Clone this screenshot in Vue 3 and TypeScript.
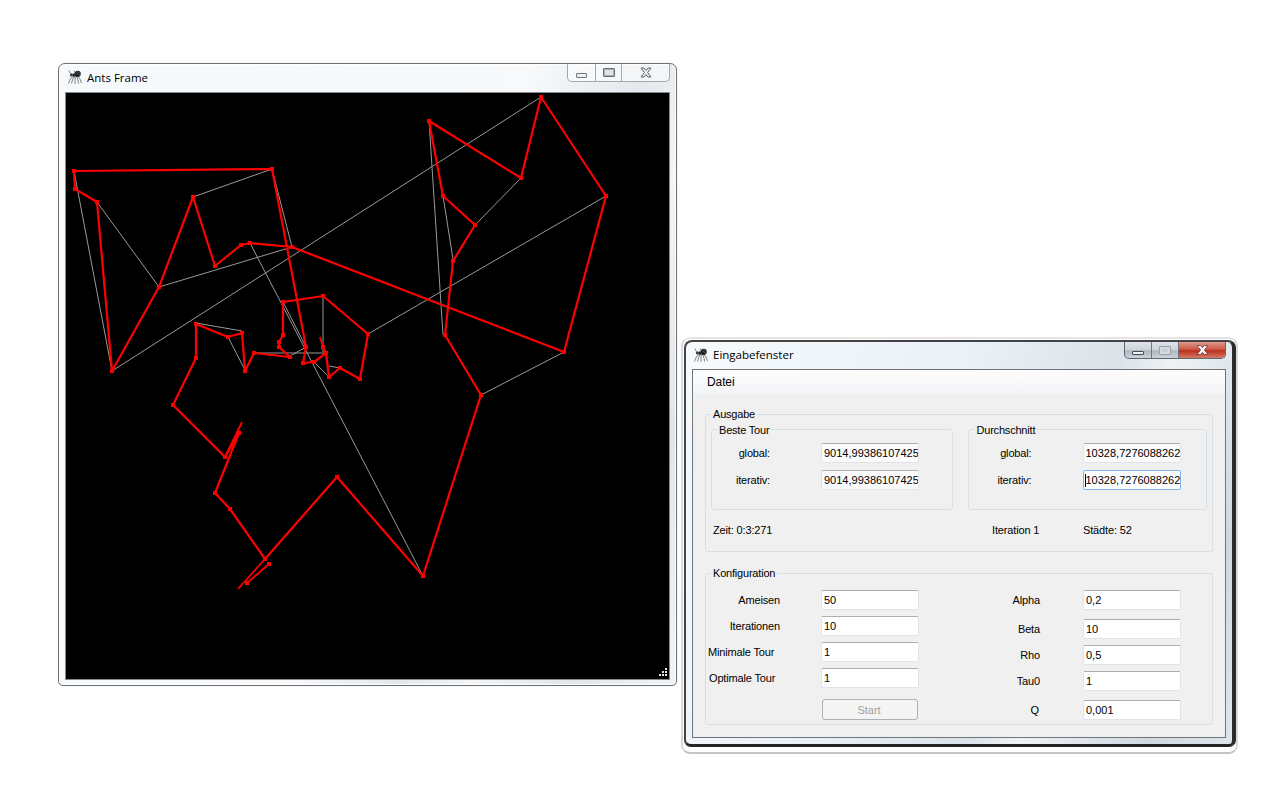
<script setup lang="ts">
// Two Win7 windows: the ant-colony canvas and the input form.
type Pt = [number, number]

// canvas drawing uses screen coordinates, viewBox starts at the canvas corner
const tour: Pt[] = [
  [215, 266], [193, 197], [159, 287], [112, 371], [97, 202], [75, 189], [74, 171], [272, 169],
  [306, 347], [303, 363], [314, 362], [326, 353], [329, 377], [340, 368], [360, 379], [368, 334],
  [323, 296], [283, 302], [283, 335], [279, 342], [279, 347], [290, 357], [254, 353], [245, 371],
  [242, 333], [228, 337], [196, 324], [196, 358], [173, 405], [225, 457], [239, 433], [215, 493],
  [230, 509], [265, 559], [337, 477], [423, 576], [481, 395], [445, 335], [453, 261], [475, 225],
  [443, 196], [429, 121], [521, 178], [541, 97], [606, 196], [564, 352], [292, 247], [250, 243],
  [241, 245], [215, 266],
]
const spurs: Pt[][] = [
  [[326, 353], [323, 347], [320, 337]],
  [[225, 457], [242, 422]],
  [[265, 559], [238, 589]],
  [[269, 564], [247, 583]],
]
const grey: Pt[][] = [
  [[74, 171], [112, 371]],
  [[97, 202], [159, 287]],
  [[159, 287], [292, 247]],
  [[193, 197], [272, 169]],
  [[272, 169], [292, 247]],
  [[112, 371], [541, 97]],
  [[368, 334], [606, 196]],
  [[250, 243], [423, 576]],
  [[283, 302], [306, 347]],
  [[323, 296], [323, 352]],
  [[254, 353], [325, 353]],
  [[290, 356], [306, 347]],
  [[314, 362], [329, 377]],
  [[329, 366], [340, 368]],
  [[196, 323], [242, 331]],
  [[228, 337], [245, 370]],
  [[429, 121], [443, 335]],
  [[443, 196], [453, 259]],
  [[521, 178], [475, 225]],
  [[564, 352], [481, 395]],
]
const extraNodes: Pt[] = [[269, 564], [247, 583], [239, 433], [279, 347], [323, 347]]
const nodes: Pt[] = [...tour, ...extraNodes]

const pts = (list: Pt[]) => list.map((p) => p.join(',')).join(' ')
const grip: Pt[] = [[665, 668], [662, 671], [665, 671], [659, 674], [662, 674], [665, 674]]

const configLeft = [
  { label: 'Ameisen', value: '50' },
  { label: 'Iterationen', value: '10' },
  { label: 'Minimale Tour', value: '1', cls: 'min-tour' },
  { label: 'Optimale Tour', value: '1', cls: 'opt-tour' },
]
const configRight = [
  { label: 'Alpha', value: '0,2' },
  { label: 'Beta', value: '10', cls: 'spaced' },
  { label: 'Rho', value: '0,5' },
  { label: 'Tau0', value: '1' },
  { label: 'Q', value: '0,001', cls: 'spaced q' },
]
</script>

<template>
  <div class="desktop">
    <svg class="defs" width="0" height="0">
      <symbol id="ant" viewBox="0 0 14 14">
        <g stroke="#666" stroke-width="0.8" fill="none">
          <path d="M6 6 L2.5 8.5 L0.5 13.5" />
          <path d="M6.5 6 L4.5 10 L3.5 13.5" />
          <path d="M7.5 6 L7 10 L7 14" />
          <path d="M8.5 6 L10 10 L10.5 13.5" />
          <path d="M9.5 6 L12 9 L13.5 13" />
          <path d="M4 4 L1.5 2.5 L1 0.5" />
          <path d="M7 3 L6 0.5" />
        </g>
        <ellipse cx="9.8" cy="3.8" rx="3" ry="3.1" fill="#1c1c1c" />
        <ellipse cx="6.2" cy="5" rx="2" ry="1.8" fill="#2a2a2a" />
        <circle cx="3.4" cy="5" r="1.5" fill="#3a3a3a" />
        <path d="M8 2.5 L12 5.5 M9.5 1.5 L12.6 3.6" stroke="#8a8a8a" stroke-width="0.5" />
      </symbol>
    </svg>

    <!-- canvas window -->
    <section class="win ants">
      <header class="title ants-title">
        <svg class="ant" width="14" height="14"><use href="#ant" /></svg>
        <span class="caption">Ants Frame</span>
        <div class="caption-btns idle">
          <div class="cbtn b-min"><i class="min-ico"></i></div>
          <div class="cbtn b-max"><i class="max-ico"></i></div>
          <div class="cbtn b-close">
            <svg width="12" height="11" viewBox="0 0 12 11">
              <path d="M1 1 H4 L6 3.4 L8 1 H11 L7.6 5.5 L11 10 H8 L6 7.6 L4 10 H1 L4.4 5.5 Z" fill="#eceef1" stroke="#5f646b" stroke-width="1" />
            </svg>
          </div>
        </div>
      </header>
      <div class="canvas-wrap">
        <svg class="canvas" viewBox="66 93 603 586" width="603" height="586">
          <rect x="66" y="93" width="603" height="586" fill="#000" />
          <polyline v-for="(g, i) in grey" :key="'g' + i" :points="pts(g)" class="edge" />
          <polyline :points="pts(tour)" class="tour" />
          <polyline v-for="(s, i) in spurs" :key="'s' + i" :points="pts(s)" class="tour thin" />
          <rect v-for="(n, i) in nodes" :key="'n' + i" :x="n[0] - 2" :y="n[1] - 2" width="4" height="4" fill="#f00" />
          <rect v-for="(d, i) in grip" :key="'d' + i" :x="d[0]" :y="d[1]" width="2" height="2" fill="#e4e4e4" />
        </svg>
      </div>
    </section>

    <!-- form window -->
    <section class="halo">
      <div class="win form-win">
        <header class="title form-title">
          <svg class="ant" width="14" height="14"><use href="#ant" /></svg>
          <span class="caption">Eingabefenster</span>
          <div class="caption-btns active">
            <div class="cbtn b-min"><i class="min-ico dark"></i></div>
            <div class="cbtn b-max"><i class="max-ico faded"></i></div>
            <div class="cbtn b-close red">
              <svg width="13" height="10" viewBox="0 0 13 10">
                <path d="M1 0.5 H4.5 L6.5 2.6 L8.5 0.5 H12 L8.4 5 L12 9.5 H8.5 L6.5 7.4 L4.5 9.5 H1 L4.6 5 Z" fill="#f4f4f4" stroke="#6b3a34" stroke-width="0.8" />
              </svg>
            </div>
          </div>
        </header>

        <div class="client">
          <nav class="menubar"><span>Datei</span></nav>
          <div class="form-body">
            <fieldset class="group">
              <legend>Ausgabe</legend>
              <div class="sub-groups">
                <fieldset class="group sub beste">
                  <legend>Beste Tour</legend>
                  <div class="out-grid">
                    <label>global:</label>
                    <input class="field ro" readonly value="9014,99386107425" />
                    <label>iterativ:</label>
                    <input class="field ro" readonly value="9014,99386107425" />
                  </div>
                </fieldset>
                <fieldset class="group sub schnitt">
                  <legend>Durchschnitt</legend>
                  <div class="out-grid">
                    <label>global:</label>
                    <input class="field ro" readonly value="10328,7276088262" />
                    <label>iterativ:</label>
                    <input class="field ro focused" readonly value="10328,7276088262" />
                  </div>
                </fieldset>
              </div>
              <div class="status">
                <span>Zeit: 0:3:271</span>
                <span>Iteration 1</span>
                <span>Städte: 52</span>
              </div>
            </fieldset>

            <fieldset class="group config">
              <legend>Konfiguration</legend>
              <div class="cfg-cols">
                <div class="cfg-col left">
                  <template v-for="row in configLeft" :key="row.label">
                    <label :class="row.cls">{{ row.label }}</label>
                    <input class="field" :value="row.value" />
                  </template>
                  <button class="start" disabled>Start</button>
                </div>
                <div class="cfg-col right">
                  <template v-for="row in configRight" :key="row.label">
                    <label :class="row.cls">{{ row.label }}</label>
                    <input class="field" :class="row.cls" :value="row.value" />
                  </template>
                </div>
              </div>
            </fieldset>
          </div>
        </div>
      </div>
    </section>
  </div>
</template>

<style scoped>
.desktop {
  position: relative;
  width: 1280px;
  height: 800px;
  overflow: hidden;
  background: #fff;
  font-family: "Liberation Sans", Arial, sans-serif;
  font-size: 11px;
  color: #000;
}
.defs {
  position: absolute;
}
.win {
  box-sizing: border-box;
  display: flex;
  flex-direction: column;
}
.ants {
  position: absolute;
  left: 58px;
  top: 63px;
  width: 619px;
  height: 623px;
  border: 1px solid #6d7175;
  border-radius: 7px 7px 5px 5px;
  background: linear-gradient(112deg, #f6fafc 0%, #f7f9fb 55%, #e4e8ec 68%, #f3f5f7 76%, #e2e6ea 88%, #f2f5f7 100%);
  box-shadow: inset 0 0 0 1px rgba(255, 255, 255, 0.8), 0 0 1px rgba(0, 0, 0, 0.25);
}
.title {
  display: flex;
  align-items: flex-start;
  flex: none;
}
.ants-title {
  height: 28px;
  padding-left: 9px;
}
.ant {
  margin-top: 6px;
  flex: none;
}
.caption {
  font-family: "Open Sans", "Liberation Sans", sans-serif;
  font-size: 11.5px;
  line-height: 16px;
  margin: 6px 0 0 5px;
  color: #000;
}
.caption-btns {
  display: flex;
  margin-left: auto;
  box-sizing: border-box;
  border: 1px solid #a3a8ae;
  border-top: 0;
  border-radius: 0 0 5px 5px;
  overflow: hidden;
}
.caption-btns.idle {
  height: 18px;
  margin-right: 6px;
  background: rgba(255, 255, 255, 0.55);
}
.cbtn {
  display: flex;
  align-items: center;
  justify-content: center;
  box-sizing: border-box;
}
.idle .b-min { width: 28px; padding-top: 5px; border-right: 1px solid #a3a8ae; }
.idle .b-max { width: 26px; border-right: 1px solid #a3a8ae; }
.idle .b-close { width: 47px; }
.min-ico {
  display: block;
  width: 11px;
  height: 5px;
  box-sizing: border-box;
  border: 1px solid #6f7780;
  border-radius: 1px;
  background: #eef1f4;
}
.max-ico {
  display: block;
  width: 12px;
  height: 9px;
  box-sizing: border-box;
  border: 1px solid #666e77;
  border-radius: 1px;
  background: #dfe2e6;
  box-shadow: inset 0 0 0 1px #a9afb6;
}
.canvas-wrap {
  margin: 0 6px;
  border: 1px solid #83888d;
  flex: none;
  width: 603px;
  height: 586px;
}
.canvas {
  display: block;
}
.edge {
  fill: none;
  stroke: #999;
  stroke-width: 1;
}
.tour {
  fill: none;
  stroke: #f00;
  stroke-width: 2.2;
  stroke-linejoin: round;
}
.tour.thin {
  stroke-width: 1.8;
}

/* form window */
.halo {
  position: absolute;
  left: 681px;
  top: 337px;
  width: 557px;
  height: 417px;
  box-sizing: border-box;
  padding: 1px 0 5px 1px;
  border: 2px solid #d9d9d9;
  border-top-color: #e4e4e4;
  border-bottom-color: #c4c4c4;
  border-radius: 9px;
}
.form-win {
  width: 552px;
  height: 407px;
  border-style: solid;
  border-color: #444 #2a2a2a #262626 #444;
  border-width: 2px 4px 3px 2px;
  border-radius: 8px 8px 7px 7px;
  background: linear-gradient(112deg, #f6fafd 0%, #eaf1f7 40%, #dbe3ea 62%, #eef2f5 70%, #cfd8e1 88%, #dfe6ec 100%);
}
.form-title {
  height: 27px;
  padding-left: 8px;
}
.form-title .ant {
  margin-top: 6px;
}
.form-title .caption {
  margin: 5px 0 0 5px;
}
.caption-btns.active {
  height: 17px;
  margin-right: 6px;
  border-color: #5e6670;
  background: linear-gradient(#dfe4ea, #ccd2d9 50%, #aeb6bf 55%, #cdd3da);
}
.active .b-min { width: 27px; padding-top: 5px; border-right: 1px solid #6f7780; }
.active .b-max { width: 27px; border-right: 1px solid #6f7780; }
.active .b-close { width: 46px; }
.min-ico.dark {
  width: 12px;
  height: 4px;
  border-color: #3f4a56;
  background: #f2f4f6;
}
.max-ico.faded {
  border-color: #98a0a8;
  background: #c9ced4;
  box-shadow: inset 0 0 0 2px #d6dade;
}
.cbtn.red {
  background: linear-gradient(#dd9a8c, #cf5a48 45%, #bb2f1e 55%, #d77a66);
}
.client {
  display: flex;
  flex-direction: column;
  flex: 1;
  min-height: 0;
  margin: 0 6px 6px;
  border: 1px solid #6f7479;
  background: #f0f0f0;
}
.menubar {
  flex: none;
  height: 24px;
  padding-left: 14px;
  line-height: 25px;
  font-size: 12px;
  letter-spacing: -0.1px;
  background: linear-gradient(#fdfdfe, #f3f4f6);
}
.form-body {
  padding: 13px 12px 0;
}
fieldset.group {
  box-sizing: border-box;
  margin: 0;
  padding: 0;
  min-width: 0;
  border: 1px solid #d8dfe4;
  border-radius: 3px;
}
legend {
  margin-left: 5px;
  padding: 0 2px;
  line-height: 14px;
  height: 14px;
  letter-spacing: -0.2px;
}
.sub legend {
  line-height: 16px;
}
.schnitt legend {
  margin-left: 6px;
}
label,
.status {
  letter-spacing: -0.15px;
}
.sub-groups {
  display: flex;
  gap: 15px;
  margin: 1px 5px 0;
}
.sub.beste {
  width: 242px;
}
.sub.schnitt {
  width: 240px;
}
.out-grid {
  display: grid;
  column-gap: 51px;
  row-gap: 7px;
  padding: 7px 0 19px;
  align-items: center;
}
.beste .out-grid {
  grid-template-columns: 58px 98px;
}
.schnitt .out-grid {
  grid-template-columns: 63px 98px;
}
.out-grid label {
  text-align: right;
}
.field {
  box-sizing: border-box;
  width: 98px;
  height: 20px;
  margin: 0;
  padding: 0 0 0 2px;
  font: 11px "Liberation Sans", Arial, sans-serif;
  color: #000;
  background: #fff;
  border: 1px solid #e0e4ea;
  border-top-color: #abadb3;
  border-radius: 2px;
  outline: none;
}
.field.ro {
  background-color: #fafafa;
}
/* focused box with the text caret at the start */
.field.focused {
  border-color: #7eb4ea;
  background: linear-gradient(#000, #000) 1px 3px / 1px 13px no-repeat #fff;
}
.status {
  display: grid;
  grid-template-columns: 279px 91px auto;
  height: 14px;
  line-height: 14px;
  margin-top: 13px;
  padding: 0 0 14px 7px;
}
fieldset.config {
  margin-top: 14px;
}
.cfg-cols {
  display: flex;
  gap: 41px;
  padding: 10px 0 4px;
}
.cfg-col {
  display: grid;
  row-gap: 6px;
  align-items: center;
  align-content: start;
}
.cfg-col.left {
  grid-template-columns: 74px 98px;
  column-gap: 41px;
}
.cfg-col.right {
  grid-template-columns: 80px 98px;
  column-gap: 43px;
}
.cfg-col label {
  text-align: right;
}
.cfg-col label.min-tour {
  text-align: left;
  padding-left: 2px;
}
.cfg-col label.opt-tour {
  text-align: left;
  padding-left: 3px;
}
.cfg-col .spaced {
  margin-top: 3px;
}
.cfg-col label.q {
  padding-right: 1px;
}
.start {
  grid-column: 2;
  justify-self: start;
  box-sizing: border-box;
  width: 96px;
  height: 21px;
  margin: 5px 0 0 1px;
  padding: 0 2px 0 0;
  font: 11px "Liberation Sans", Arial, sans-serif;
  color: #a0a0a0;
  background: #f4f4f4;
  border: 1px solid #adb2b5;
  border-radius: 3px;
}
</style>

<style>
html,
body {
  margin: 0;
  background: #fff;
}
</style>
